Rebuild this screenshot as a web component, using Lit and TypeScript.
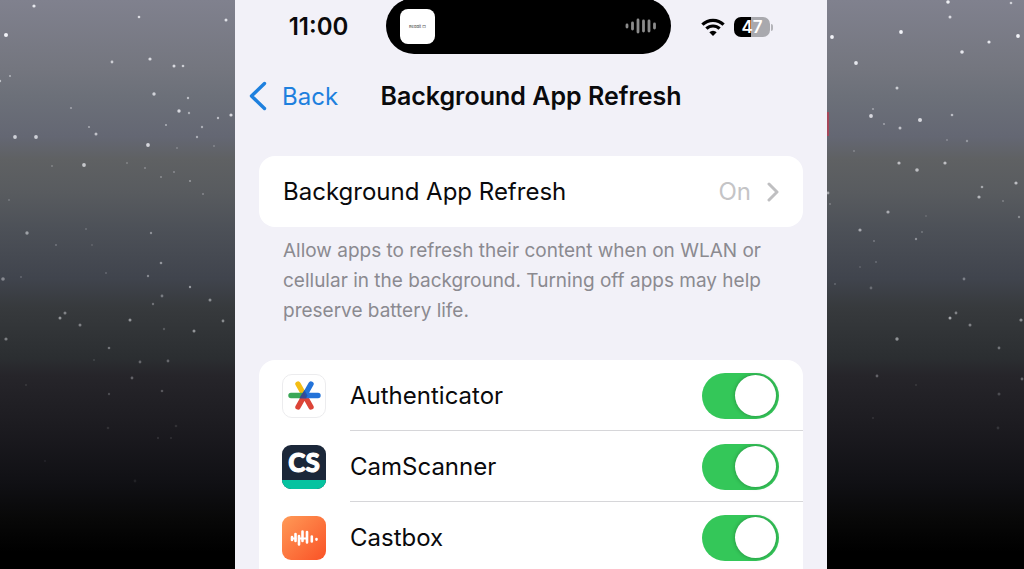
import { LitElement, html, svg, css } from 'lit';
import { customElement, property, state } from 'lit/decorators.js';

// ── Data ──────────────────────────────────────────────────────────────────────

interface AppEntry {
  id: string;
  name: string;
  enabled: boolean;
}

const APPS: AppEntry[] = [
  { id: 'authenticator', name: 'Authenticator', enabled: true },
  { id: 'camscanner', name: 'CamScanner', enabled: true },
  { id: 'castbox', name: 'Castbox', enabled: true },
];

// x, y, radius, opacity
const STARS: [number, number, number, number][] = [
  [34, 6, 1.6, 0.9], [139, 17, 1.3, 0.8], [226, 20, 1.5, 0.85], [6, 35, 2, 1],
  [112, 62, 1.4, 0.7], [150, 59, 1.6, 0.8], [174, 66, 1.5, 0.8], [183, 66, 1.3, 0.7],
  [10, 76, 1.1, 0.5], [0, 81, 1.2, 0.6], [154, 94, 1.7, 0.75], [188, 98, 1.2, 0.6],
  [71, 108, 1.1, 0.4], [179, 111, 1.7, 0.8], [189, 113, 1.2, 0.5], [218, 118, 1.2, 0.6],
  [231, 115, 1.6, 0.8], [166, 125, 1.1, 0.5], [202, 127, 1.2, 0.5], [89, 127, 1.1, 0.45],
  [96, 134, 1.5, 0.65], [15, 137, 1.9, 0.75], [36, 137, 1.9, 0.75], [197, 137, 1.2, 0.5],
  [148, 145, 1.9, 0.8], [177, 148, 1, 0.25], [214, 146, 1, 0.25], [84, 165, 1.9, 0.7],
  [52, 166, 1, 0.25], [127, 163, 1, 0.25], [145, 168, 1, 0.3], [161, 177, 1.1, 0.3],
  [174, 172, 1, 0.3], [190, 181, 1.1, 0.4], [203, 194, 1, 0.3], [9, 200, 1.1, 0.2],
  [27, 233, 1.7, 0.5], [86, 229, 1, 0.2], [151, 233, 1.2, 0.4], [56, 245, 1, 0.25],
  [92, 245, 1, 0.15], [161, 263, 1.3, 0.45], [148, 276, 1.2, 0.4], [3, 279, 1.8, 0.4],
  [21, 277, 1, 0.2], [106, 273, 1, 0.2], [190, 287, 1.2, 0.5], [162, 296, 1.4, 0.35],
  [210, 300, 1.5, 0.45], [153, 304, 1.2, 0.3], [65, 313, 1.5, 0.4], [60, 318, 1.5, 0.5],
  [80, 325, 1.5, 0.4], [130, 320, 1.5, 0.5], [223, 321, 1.4, 0.45], [194, 331, 1.5, 0.5],
  [164, 329, 1.2, 0.2], [6, 339, 1.6, 0.4], [109, 348, 1.3, 0.35], [94, 360, 1.1, 0.12],
  [140, 362, 1.4, 0.3], [168, 361, 1.4, 0.3], [132, 378, 1.4, 0.3], [109, 394, 1.2, 0.2],
  [162, 391, 1.3, 0.25], [26, 385, 1.1, 0.1], [108, 428, 1.3, 0.1], [176, 426, 1.3, 0.1],
  [158, 438, 1.2, 0.1], [171, 438, 1.1, 0.1], [45, 461, 1.2, 0.06], [135, 481, 1.4, 0.08],
  [948, 2, 1.8, 0.95], [1011, 3, 1.3, 0.7], [950, 17, 1.5, 0.8], [901, 32, 1.9, 1],
  [832, 37, 1.9, 1], [1018, 36, 1.9, 1], [989, 42, 1.6, 0.9], [962, 52, 1.8, 0.9],
  [856, 63, 1.9, 0.9], [897, 88, 1.5, 0.7], [873, 109, 1.1, 0.4], [871, 116, 1.9, 0.8],
  [884, 124, 1.1, 0.4], [920, 120, 2, 0.8], [952, 115, 1.3, 0.6], [900, 128, 1.5, 0.65],
  [947, 140, 1.1, 0.25], [967, 141, 1.2, 0.35], [854, 151, 1, 0.25], [899, 163, 1.6, 0.65],
  [945, 163, 1.6, 0.65], [917, 170, 1.8, 0.65], [828, 193, 1.4, 0.5], [982, 187, 1.3, 0.5],
  [979, 197, 1.6, 0.6], [1016, 183, 1.6, 0.65], [1003, 201, 1.1, 0.25], [830, 204, 1.1, 0.25],
  [888, 212, 1.6, 0.55], [1019, 217, 1.2, 0.35], [926, 216, 1, 0.15], [860, 230, 1.6, 0.55],
  [922, 232, 1, 0.25], [874, 241, 1.1, 0.25], [916, 239, 1.2, 0.4], [876, 262, 1.1, 0.2],
  [860, 267, 1.1, 0.15], [964, 279, 1.4, 0.35], [835, 284, 1.1, 0.2], [871, 288, 1.4, 0.25],
  [956, 313, 1.4, 0.4], [950, 318, 1.5, 0.6], [970, 325, 1.5, 0.4], [1021, 320, 1.6, 0.45],
  [897, 339, 1.7, 0.5], [999, 348, 1.4, 0.35], [877, 376, 1.4, 0.3], [1022, 379, 1.4, 0.3],
  [999, 394, 1.5, 0.2], [916, 385, 1.1, 0.1], [873, 418, 1.1, 0.1], [998, 428, 1.4, 0.12],
];

// ── App icons ─────────────────────────────────────────────────────────────────

const authenticatorIcon = html`
  <svg class="icon" viewBox="0 0 44 44" aria-hidden="true">
    <rect x="0.5" y="0.5" width="43" height="43" rx="9.5" fill="#fff" stroke="#ececee" />
    <g fill="none" stroke-width="5.4" stroke-linecap="round">
      <path d="M16 10 22.500 21.500" stroke="#f4bd14" />
      <path d="M9 21.500H22" stroke="#3aa757" />
      <path d="M22.500 21.500 16 33M22.500 21.500 29 33" stroke="#dc4437" />
      <path d="M29 10 22.500 21.500H36" stroke="#2373d9" stroke-linejoin="round" />
    </g>
    <path d="M22.500 16 25.500 21.500 24 24.200H17.500Z" fill="#2055ae" />
    <path d="M17.600 24.200 20 20 22 18 24.500 24.200Z" fill="#394a8f" />
  </svg>
`;

const camscannerIcon = html`
  <svg class="icon" viewBox="0 0 44 44" aria-hidden="true">
    <defs>
      <clipPath id="cs-clip"><rect width="44" height="44" rx="9" /></clipPath>
    </defs>
    <g clip-path="url(#cs-clip)">
      <rect width="44" height="44" fill="#1b2739" />
      <rect y="35" width="44" height="9" fill="#06c3a0" />
    </g>
    <text class="cs" x="22" y="27" text-anchor="middle">CS</text>
  </svg>
`;

const castboxIcon = html`
  <svg class="icon" viewBox="0 0 44 44" aria-hidden="true">
    <defs>
      <linearGradient id="cb-fill" x1="0" y1="0" x2="1" y2="1">
        <stop offset="0" stop-color="#ff9a57" />
        <stop offset="1" stop-color="#fa5226" />
      </linearGradient>
    </defs>
    <rect width="44" height="44" rx="9" fill="url(#cb-fill)" />
    <g fill="none" stroke="#fff" stroke-width="2.6" stroke-linecap="round">
      <path d="M10 21V24M13.500 18V25M17 20V28.500M20.500 15.500V25M25 16V26.500M29.800 20.500V25.500M34.500 23V23.600" />
      <path d="M10 22.500H13.500M17 22.500H25" stroke-width="2" />
    </g>
  </svg>
`;

const ICONS: Record<string, unknown> = {
  authenticator: authenticatorIcon,
  camscanner: camscannerIcon,
  castbox: castboxIcon,
};

// ── NightSky ──────────────────────────────────────────────────────────────────

@customElement('night-sky')
export class NightSky extends LitElement {
  static styles = css`
    :host {
      display: block;
      background: linear-gradient(
        #80818e 0%,
        #74767f 12%,
        #6c7079 17%,
        #646773 24%,
        #5f6163 28%,
        #585b5f 34%,
        #4d5158 40%,
        #40444d 49%,
        #373a3d 54%,
        #2b2e31 63%,
        #26252a 66%,
        #1c1b20 75%,
        #101014 85%,
        #080808 91%,
        #000 97%
      );
    }

    .stars {
      display: block;
      width: 100%;
      height: 100%;
    }
  `;

  render() {
    return html`
      <svg class="stars" viewBox="0 0 1024 569" preserveAspectRatio="xMidYMid slice" aria-hidden="true">
        ${STARS.map(
          ([x, y, r, o]) => svg`<circle cx=${x} cy=${y} r=${r} fill="#f2f3f8" fill-opacity=${o} />`,
        )}
        <rect x="826" y="112" width="3" height="24" fill="#a5475a" />
      </svg>
    `;
  }
}

// ── StatusBar ─────────────────────────────────────────────────────────────────

@customElement('status-bar')
export class StatusBar extends LitElement {
  static styles = css`
    :host {
      display: grid;
      grid-template-columns: 151fr 285fr 156fr;
      height: 54px;
      align-items: center;
    }

    .time {
      padding-left: 16px;
      text-align: center;
      font-size: 24px;
      font-weight: 600;
      line-height: 30px;
    }

    .island {
      display: flex;
      align-items: center;
      justify-content: space-between;
      height: 56px;
      box-sizing: border-box;
      padding: 0 14px;
      margin-top: -2px;
      border-radius: 28px;
      background: #000;
    }

    .activity {
      display: flex;
      align-items: center;
      justify-content: center;
      width: 35px;
      height: 35px;
      border-radius: 8px;
      background: #fff;
      color: #555;
      font-size: 4px;
      font-weight: 500;
    }

    .wave {
      width: 32px;
      height: 16px;
    }

    .indicators {
      display: flex;
      align-items: center;
      gap: 9px;
      padding-left: 30px;
    }

    .wifi {
      width: 24px;
      height: 18px;
    }

    .battery {
      display: flex;
      align-items: center;
      gap: 1px;
    }

    .level {
      width: 36px;
      border-radius: 7px;
      background: linear-gradient(90deg, #000 47%, #a9a9ae 47%);
      color: #fff;
      font-size: 17px;
      font-weight: 600;
      line-height: 20px;
      text-align: center;
    }

    .tip {
      width: 2px;
      height: 7px;
      border-radius: 0 2px 2px 0;
      background: #b4b4b9;
    }
  `;

  @property({ type: String }) time = '';
  @property({ type: Number }) battery = 0;

  render() {
    return html`
      <div class="time">${this.time}</div>
      <div class="island">
        <div class="activity">Reddit ▢</div>
        <svg class="wave" viewBox="0 0 32 16" aria-hidden="true">
          <path
            d="M2 7V9M7.500 5V11M13 2V14M18.500 3V13M24 3V13M29.500 6V10"
            stroke="#8b8b8b"
            stroke-width="2.800"
            stroke-linecap="round"
          />
        </svg>
      </div>
      <div class="indicators">
        <svg class="wifi" viewBox="0 0 24 18" role="img" aria-label="WLAN">
          <g fill="none" stroke="#000" stroke-width="3.2">
            <path d="M1.400 6.600A15.200 15.200 0 0 1 22.600 6.600" />
            <path d="M5.400 10.700A9.400 9.400 0 0 1 18.600 10.700" />
          </g>
          <path d="M12 18 8.300 14.200A5.300 5.300 0 0 1 15.700 14.200Z" />
        </svg>
        <div class="battery">
          <div class="level">${this.battery}</div>
          <div class="tip"></div>
        </div>
      </div>
    `;
  }
}

// ── AppRoot ───────────────────────────────────────────────────────────────────

@customElement('app-root')
export class AppRoot extends LitElement {
  static styles = css`
    :host {
      display: grid;
      grid-template-columns: 235fr 592fr 197fr;
      position: relative;
      height: 100vh;
      overflow: hidden;
      font-family: Inter, 'Liberation Sans', sans-serif;
      color: #0a0a0c;
    }

    .sky {
      position: absolute;
      inset: 0;
    }

    .phone {
      grid-column: 2;
      position: relative;
      background: #f2f1f8;
    }

    .nav {
      display: grid;
      grid-template-columns: 1fr auto 1fr;
      align-items: center;
      height: 84px;
      padding: 0 14px;
    }

    .back {
      display: flex;
      align-items: center;
      gap: 15px;
      justify-self: start;
      padding: 0;
      border: 0;
      background: none;
      color: #1e80de;
      font: inherit;
      font-size: 24px;
      cursor: pointer;
    }

    .back svg {
      width: 18px;
      height: 30px;
    }

    h1 {
      margin: 0;
      font-size: 25px;
      font-weight: 600;
      line-height: 32px;
      white-space: nowrap;
    }

    .content {
      padding: 18px 24px 0;
    }

    .card {
      border-radius: 16px;
      background: #fff;
    }

    .link {
      display: flex;
      align-items: center;
      gap: 16px;
      width: 100%;
      height: 71px;
      padding: 0 24px;
      border: 0;
      color: inherit;
      font: inherit;
      font-size: 24px;
      text-align: left;
      cursor: pointer;
    }

    .value {
      margin-left: auto;
      color: #c4c4c6;
    }

    .link svg {
      width: 12px;
      height: 20px;
    }

    .note {
      margin: 9px 24px 34px;
      color: #8b8a90;
      font-size: 19px;
      line-height: 30px;
    }

    .apps {
      margin: 0;
      padding: 0 0 24px;
      list-style: none;
    }

    .app {
      display: flex;
      align-items: center;
      gap: 24px;
      padding-left: 23px;
    }

    .icon {
      display: block;
      flex: none;
      width: 44px;
      height: 44px;
    }

    .cs {
      fill: #fff;
      stroke: #fff;
      stroke-width: 1px;
      font-family: Lato, sans-serif;
      font-size: 26px;
      font-weight: 900;
    }

    .row {
      display: flex;
      align-items: center;
      justify-content: space-between;
      flex: 1;
      height: 71px;
      padding-right: 24px;
      font-size: 24px;
    }

    .app + .app .row {
      box-shadow: 0 -1px #d6d6d9;
    }

    .switch {
      appearance: none;
      display: flex;
      align-items: center;
      justify-content: flex-start;
      box-sizing: border-box;
      width: 77px;
      height: 46px;
      margin: 0;
      padding: 0 3px;
      border-radius: 23px;
      background: #e3e3e8;
      cursor: pointer;
    }

    .switch::before {
      content: '';
      width: 41px;
      height: 41px;
      border-radius: 50%;
      background: #fff;
      box-shadow: 0 0 4px rgba(0, 0, 0, 0.3);
    }

    .switch:checked {
      justify-content: flex-end;
      background: #34c759;
    }
  `;

  @state() private apps: AppEntry[] = APPS;

  private toggle(id: string): void {
    this.apps = this.apps.map(app => (app.id === id ? { ...app, enabled: !app.enabled } : app));
  }

  private renderApp(app: AppEntry) {
    return html`
      <li class="app">
        ${ICONS[app.id]}
        <div class="row">
          <label for=${app.id}>${app.name}</label>
          <input
            class="switch"
            type="checkbox"
            id=${app.id}
            .checked=${app.enabled}
            @change=${() => this.toggle(app.id)}
          />
        </div>
      </li>
    `;
  }

  render() {
    return html`
      <night-sky class="sky"></night-sky>
      <main class="phone">
        <status-bar time="11:00" battery="47"></status-bar>
        <header class="nav">
          <button class="back" type="button">
            <svg viewBox="0 0 18 30" aria-hidden="true">
              <path
                d="M15.500 2.500 2.500 15 15.500 27.500"
                fill="none"
                stroke="currentColor"
                stroke-width="3.400"
                stroke-linecap="round"
                stroke-linejoin="round"
              />
            </svg>
            Back
          </button>
          <h1>Background App Refresh</h1>
        </header>
        <div class="content">
          <button class="card link" type="button">
            <span>Background App Refresh</span>
            <span class="value">On</span>
            <svg viewBox="0 0 12 20" aria-hidden="true">
              <path
                d="M2 2 10 10 2 18"
                fill="none"
                stroke="#bfbfc1"
                stroke-width="3"
                stroke-linecap="round"
                stroke-linejoin="round"
              />
            </svg>
          </button>
          <p class="note">
            Allow apps to refresh their content when on WLAN or cellular in the background. Turning
            off apps may help preserve battery life.
          </p>
          <ul class="card apps">
            ${this.apps.map(app => this.renderApp(app))}
          </ul>
        </div>
      </main>
    `;
  }
}

declare global {
  interface HTMLElementTagNameMap {
    'app-root': AppRoot;
    'night-sky': NightSky;
    'status-bar': StatusBar;
  }
}
